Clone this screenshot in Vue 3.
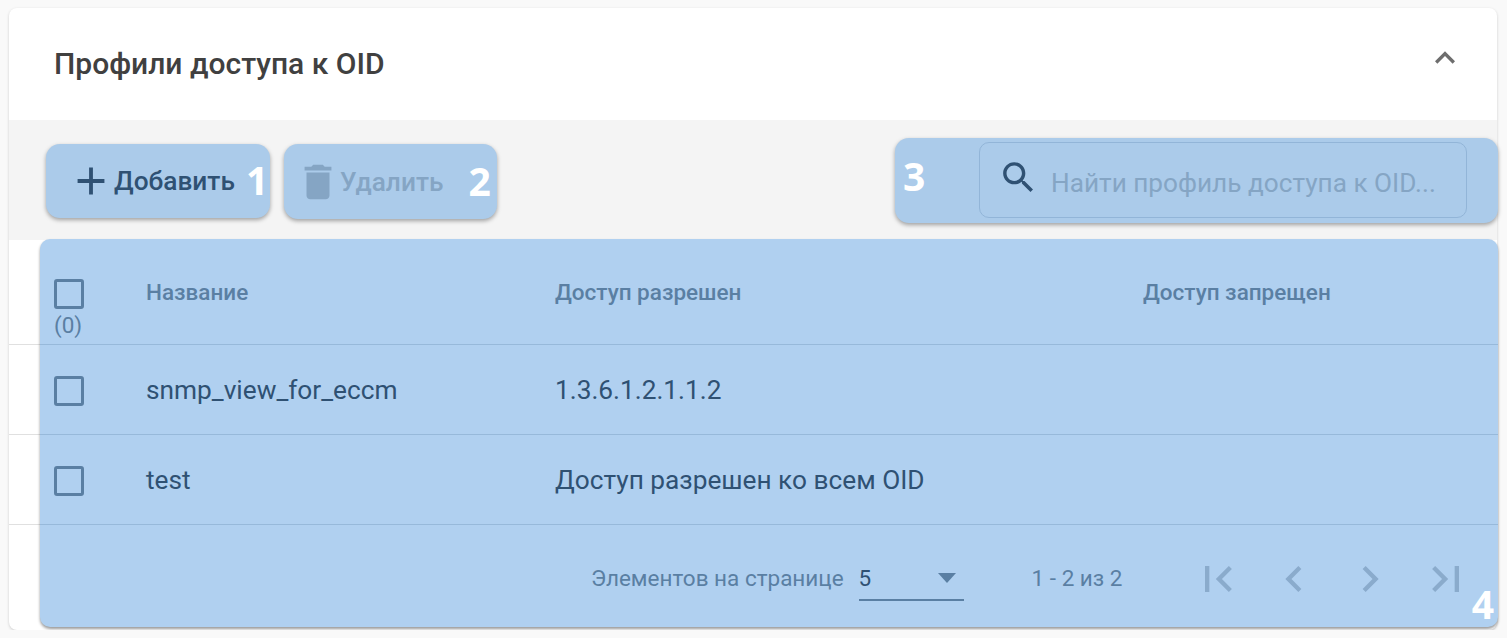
<script setup>
const rows = [
  { name: 'snmp_view_for_eccm', allow: '1.3.6.1.2.1.1.2' },
  { name: 'test', allow: 'Доступ разрешен ко всем OID' },
]
</script>

<template>
  <div class="card">
    <header class="head">
      <h1 class="title">Профили доступа к OID</h1>
      <svg class="chev" viewBox="0 0 24 24"><path d="M7.41 15.41L12 10.83l4.59 4.58L18 14l-6-6-6 6z" /></svg>
    </header>

    <div class="toolbar">
      <button class="btn add">
        <svg class="btn-ico" viewBox="0 0 24 24"><path d="M19 13h-6v6h-2v-6H5v-2h6V5h2v6h6v2z" /></svg>
        <span class="btn-text">Добавить</span>
        <span class="num n1">1</span>
      </button>
      <button class="btn del">
        <svg class="btn-ico" viewBox="0 0 24 24"><path d="M6 19c0 1.1.9 2 2 2h8c1.1 0 2-.9 2-2V7H6v12zM19 4h-3.5l-1-1h-5l-1 1H5v2h14V4z" /></svg>
        <span class="btn-text">Удалить</span>
        <span class="num n2">2</span>
      </button>
      <div class="search-panel">
        <span class="num n3">3</span>
        <div class="search">
          <svg class="search-ico" viewBox="0 0 24 24"><path d="M15.5 14h-.79l-.28-.27C15.41 12.59 16 11.11 16 9.5 16 5.91 13.09 3 9.5 3S3 5.91 3 9.5 5.91 16 9.5 16c1.61 0 3.09-.59 4.23-1.57l.27.28v.79l5 4.99L20.49 19l-4.99-5zm-6 0C7.01 14 5 11.99 5 9.5S7.01 5 9.5 5 14 7.01 14 9.5 11.99 14 9.5 14z" /></svg>
          <span class="placeholder">Найти профиль доступа к OID...</span>
        </div>
      </div>
    </div>

    <div class="body">
      <div class="stubs">
        <div class="stub s-head"></div>
        <div class="stub s-row"></div>
        <div class="stub s-row"></div>
      </div>
      <div class="panel">
        <div class="row row-head">
          <div class="c-check">
            <span class="box"></span>
            <span class="count">(0)</span>
          </div>
          <div class="c-name">Название</div>
          <div class="c-allow">Доступ разрешен</div>
          <div class="c-deny">Доступ запрещен</div>
        </div>
        <div v-for="r in rows" :key="r.name" class="row row-data">
          <div class="c-check"><span class="box"></span></div>
          <div class="c-name">{{ r.name }}</div>
          <div class="c-allow">{{ r.allow }}</div>
          <div class="c-deny"></div>
        </div>
        <div class="foot">
          <span class="per-label">Элементов на странице</span>
          <div class="select">
            <span class="select-val">5</span>
            <span class="caret"></span>
          </div>
          <span class="range">1 - 2 из 2</span>
          <div class="pager">
            <svg viewBox="0 0 24 24"><path d="M18.41 16.59L13.82 12l4.59-4.59L17 6l-6 6 6 6zM6 6h2v12H6z" /></svg>
            <svg viewBox="0 0 24 24"><path d="M15.41 7.41L14 6l-6 6 6 6 1.41-1.41L10.83 12z" /></svg>
            <svg viewBox="0 0 24 24"><path d="M10 6L8.59 7.41 13.17 12l-4.58 4.58L10 18l6-6z" /></svg>
            <svg viewBox="0 0 24 24"><path d="M5.59 7.41L10.18 12l-4.59 4.59L7 18l6-6-6-6zM16 6h2v12h-2z" /></svg>
          </div>
          <span class="num n4">4</span>
        </div>
      </div>
    </div>
  </div>
</template>

<style>
html, body {
  background: #f9f9f9;
}
</style>

<style scoped>
.card {
  box-sizing: border-box;
  width: 1488px;
  height: 622px;
  margin: 8px 0 0 9px;
  background: #fff;
  border-radius: 8px;
  box-shadow: 0 1px 3px rgba(0, 0, 0, 0.18);
  font-family: Roboto, "Liberation Sans", sans-serif;
  position: relative;
}
.head {
  height: 112px;
  display: flex;
  align-items: center;
  justify-content: space-between;
  padding: 0 32px 0 45px;
  box-sizing: border-box;
}
.title {
  margin: 0;
  font-size: 30px;
  font-weight: 500;
  color: #404040;
  position: relative;
  top: -1px;
}
.chev {
  width: 40px;
  height: 40px;
  fill: #6e6e6e;
  margin-top: -13px;
}
.toolbar {
  height: 120px;
  box-sizing: border-box;
  background: #f4f4f4;
  display: flex;
  align-items: flex-start;
  padding: 24px 0 0 37px;
}
.btn {
  display: flex;
  align-items: center;
  height: 74px;
  padding: 0;
  border: 0;
  border-radius: 14px;
  background: #abcbea;
  box-shadow: 0 2px 4px rgba(0, 0, 0, 0.35);
  font-family: inherit;
  font-size: 26.25px;
  font-weight: 500;
}
.add {
  width: 224px;
  padding-left: 22px;
  color: #2f5173;
}
.del {
  width: 213px;
  height: 75px;
  margin-left: 14px;
  padding-left: 11px;
  color: #85a5c4;
}
.btn-ico {
  width: 46px;
  height: 46px;
  fill: currentColor;
  flex: none;
}
.btn-text {
  white-space: nowrap;
}
.add .btn-ico {
  fill: #2f5173;
}
.del .btn-text {
  margin-left: -1px;
}
.num {
  font-family: "Open Sans", sans-serif;
  font-weight: 700;
  font-size: 39px;
  line-height: 1;
  color: #fff;
}
.n1 {
  margin-left: 11px;
  margin-top: -3px;
}
.n2 {
  margin-left: 25px;
  margin-top: -2px;
}
.search-panel {
  display: flex;
  align-items: flex-start;
  width: 603px;
  height: 85px;
  margin: -6px 0 0 auto;
  position: relative;
  left: 1px;
  box-sizing: border-box;
  border-radius: 14px;
  background: #abcbea;
  box-shadow: 0 2px 4px rgba(0, 0, 0, 0.35);
}
.n3 {
  margin: 18px 0 0 8px;
}
.search {
  box-sizing: border-box;
  display: flex;
  align-items: center;
  width: 488px;
  height: 76px;
  margin: 4px 31px 0 auto;
  border: 1px solid #92b5d8;
  border-radius: 10px;
  padding-left: 18px;
}
.search-ico {
  width: 41px;
  height: 41px;
  fill: #2f5173;
  flex: none;
  margin-top: -5px;
}
.placeholder {
  margin-left: 12px;
  margin-top: 5px;
  font-size: 26.2px;
  color: #85a5c4;
  white-space: nowrap;
}
.body {
  display: flex;
  align-items: flex-start;
}
.stubs {
  width: 31px;
  flex: none;
}
.stub {
  box-sizing: border-box;
  border-bottom: 1px solid #e0e0e0;
}
.s-head {
  height: 105px;
}
.s-row {
  height: 90px;
}
.panel {
  width: 1458px;
  height: 388px;
  margin-top: -1px;
  border-radius: 10px;
  background: #b0d0f0;
  box-shadow: 0 2px 3px rgba(0, 0, 0, 0.4);
  position: relative;
  flex: none;
}
.row {
  display: grid;
  grid-template-columns: 106px 409px 588px 1fr;
  box-sizing: border-box;
  border-bottom: 1px solid #97b9da;
}
.row-head {
  height: 106px;
  font-size: 22.5px;
  font-weight: 500;
  color: #5a7fa3;
  padding-top: 40px;
  line-height: 27px;
}
.row-data {
  height: 90px;
  align-items: center;
  font-size: 26.25px;
  color: #2f5173;
}
.c-check {
  display: flex;
  flex-direction: column;
  align-items: flex-start;
  padding-left: 14px;
}
.row-data .c-check {
  margin-top: 2px;
}
.box {
  display: block;
  box-sizing: border-box;
  width: 30px;
  height: 30px;
  border: 3px solid #5a7fa3;
  border-radius: 3px;
}
.count {
  font-size: 22.5px;
  font-weight: 400;
  color: #5a7fa3;
  margin-top: 3px;
}
.foot {
  display: flex;
  align-items: center;
  height: 102px;
  padding: 4px 0 0 551px;
  box-sizing: border-box;
  font-size: 22.5px;
  color: #5a7fa3;
  position: relative;
}
.per-label {
  white-space: nowrap;
}
.select {
  box-sizing: border-box;
  width: 105px;
  height: 44px;
  align-self: flex-start;
  margin: 28px 0 0 15px;
  display: flex;
  align-items: center;
  justify-content: space-between;
  border-bottom: 2px solid #5a7fa3;
  padding: 0 8px 0 0;
}
.select-val {
  color: #2f5173;
  font-size: 22.5px;
}
.caret {
  width: 0;
  height: 0;
  border-left: 9px solid transparent;
  border-right: 9px solid transparent;
  border-top: 10px solid #5a7fa3;
}
.range {
  margin-left: 68px;
  white-space: nowrap;
}
.pager {
  display: flex;
  gap: 24px;
  margin: 2px 0 0 69px;
}
.pager svg {
  width: 52px;
  height: 52px;
  fill: #8aabcc;
  flex: none;
}
.n4 {
  position: absolute;
  right: 4px;
  bottom: 4px;
}
</style>
